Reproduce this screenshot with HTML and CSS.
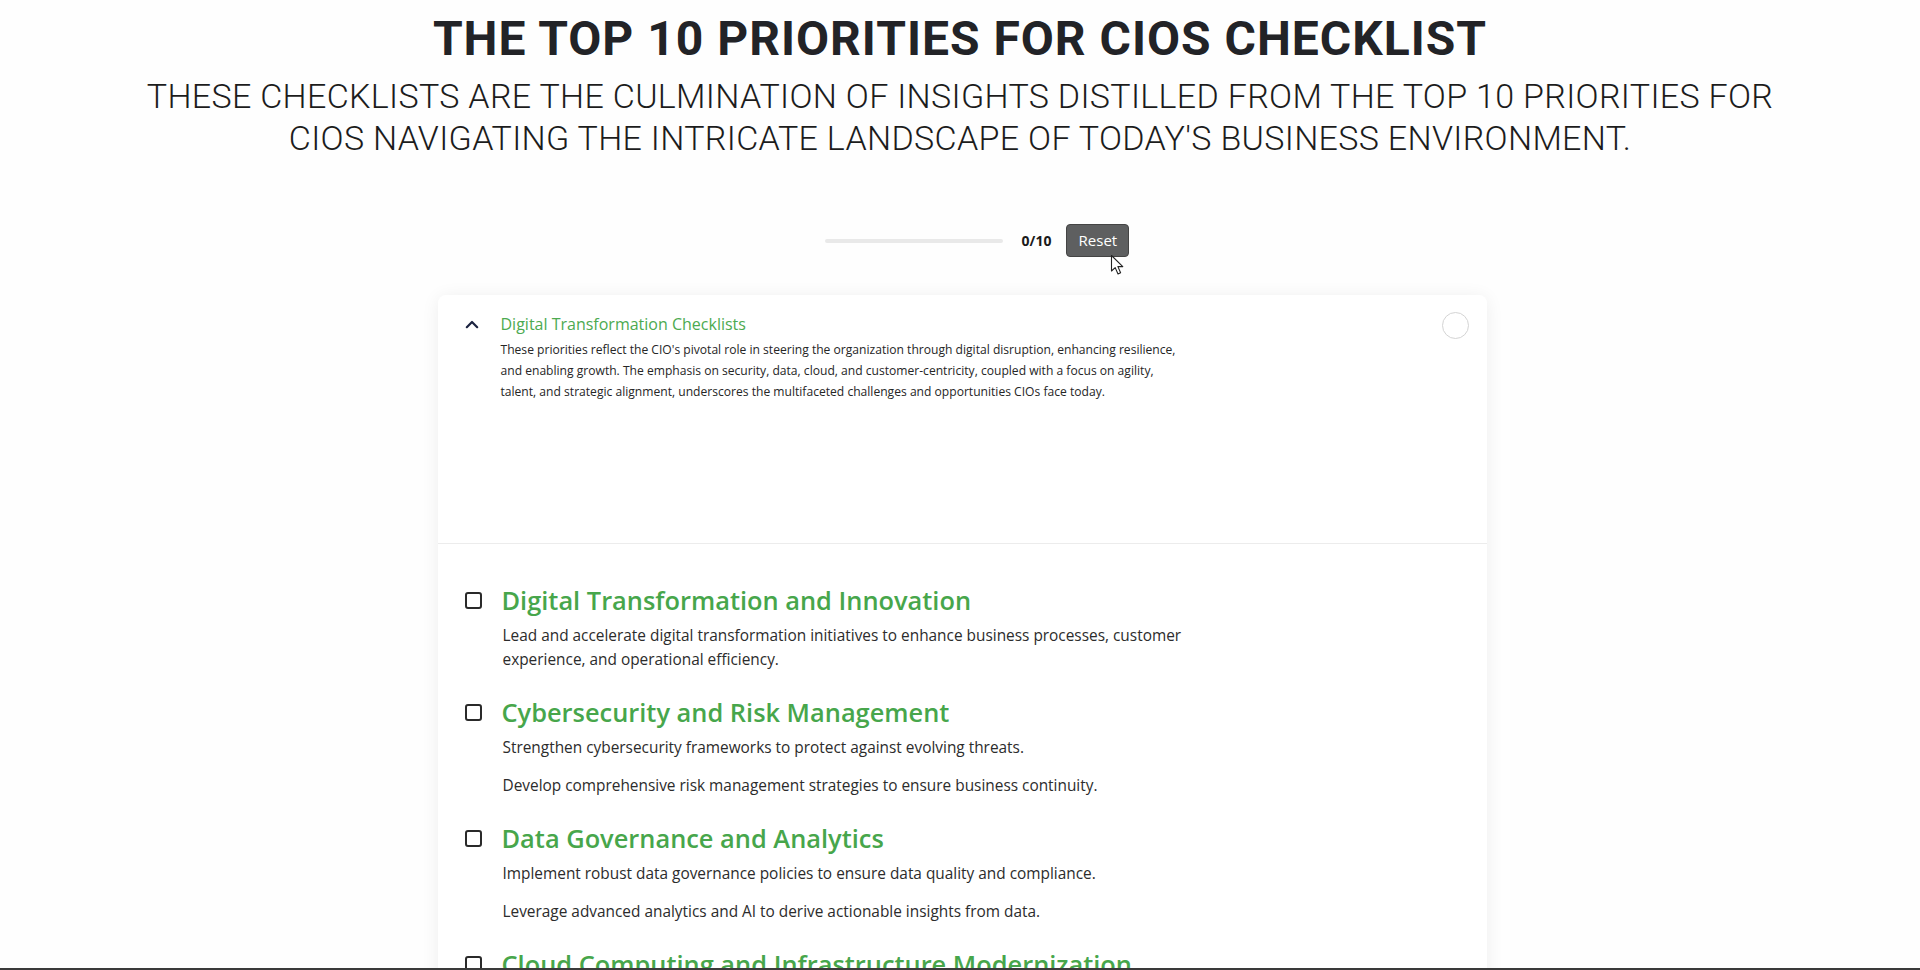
FILE: index.html
```html
<!DOCTYPE html>
<html lang="en">
<head>
<meta charset="utf-8">
<title>The Top 10 Priorities for CIOs Checklist</title>
<link rel="stylesheet" href="styles.css">
</head>
<body>
<div class="page">
  <header class="hero">
    <h1 class="hero-title">THE TOP 10 PRIORITIES FOR CIOS CHECKLIST</h1>
    <p class="hero-sub">THESE CHECKLISTS ARE THE CULMINATION OF INSIGHTS DISTILLED FROM THE TOP 10 PRIORITIES FOR<br>CIOS NAVIGATING THE INTRICATE LANDSCAPE OF TODAY'S BUSINESS ENVIRONMENT.</p>
  </header>

  <div class="progress-row">
    <div class="progress-track"><div class="progress-fill" style="width:0%"></div></div>
    <span class="progress-count">0/10</span>
    <div class="reset-wrap">
      <button class="reset-btn" type="button">Reset</button>
      <svg class="cursor" width="16" height="22" viewBox="0 0 16 22" aria-hidden="true">
        <path d="M1.5 1.5 L1.5 17 L5.2 13.6 L8 20 L10.6 18.8 L7.9 12.6 L12.8 12.6 Z" fill="#fff" stroke="#222" stroke-width="1.1" stroke-linejoin="round"/>
      </svg>
    </div>
  </div>

  <section class="card">
    <div class="card-head">
      <div class="head-row">
        <svg class="chevron" width="14" height="10" viewBox="0 0 14 10" aria-hidden="true">
          <path d="M1.8 8.2 L7 3 L12.2 8.2" fill="none" stroke="#1b2340" stroke-width="2.2" stroke-linecap="round" stroke-linejoin="round"/>
        </svg>
        <span class="head-title">Digital Transformation Checklists</span>
        <span class="head-circle"></span>
      </div>
      <p class="head-desc">These priorities reflect the CIO's pivotal role in steering the organization through digital disruption, enhancing resilience, and enabling growth. The emphasis on security, data, cloud, and customer-centricity, coupled with a focus on agility, talent, and strategic alignment, underscores the multifaceted challenges and opportunities CIOs face today.</p>
    </div>

    <div class="items">
      <div class="item">
        <div class="item-row"><span class="box"></span><h2 class="item-title">Digital Transformation and Innovation</h2></div>
        <p class="item-text">Lead and accelerate digital transformation initiatives to enhance business processes, customer experience, and operational efficiency.</p>
      </div>
      <div class="item">
        <div class="item-row"><span class="box"></span><h2 class="item-title">Cybersecurity and Risk Management</h2></div>
        <p class="item-text">Strengthen cybersecurity frameworks to protect against evolving threats.</p>
        <p class="item-text">Develop comprehensive risk management strategies to ensure business continuity.</p>
      </div>
      <div class="item">
        <div class="item-row"><span class="box"></span><h2 class="item-title">Data Governance and Analytics</h2></div>
        <p class="item-text">Implement robust data governance policies to ensure data quality and compliance.</p>
        <p class="item-text">Leverage advanced analytics and AI to derive actionable insights from data.</p>
      </div>
      <div class="item">
        <div class="item-row"><span class="box"></span><h2 class="item-title">Cloud Computing and Infrastructure Modernization</h2></div>
        <p class="item-text">Accelerate cloud adoption to improve scalability, agility, and cost efficiency.</p>
      </div>
    </div>
  </section>
</div>
<div class="frame-bottom"></div>
</body>
</html>
```

FILE: styles.css
```css
* { box-sizing: border-box; }

html, body {
  margin: 0;
  padding: 0;
  background: #fefefe;
  height: 100%;
  overflow: hidden;
}

body {
  font-family: "Open Sans", "Liberation Sans", sans-serif;
  color: #2a2a2a;
}

.page {
  display: flex;
  flex-direction: column;
  align-items: center;
}

.hero {
  display: flex;
  flex-direction: column;
  align-items: center;
  padding-top: 13px;
}

.hero-title {
  margin: 0;
  font-family: "Roboto", "Liberation Sans", sans-serif;
  font-weight: 700;
  font-size: 48px;
  line-height: 52px;
  color: #222327;
  letter-spacing: 1px;
}

.hero-sub {
  margin: 10px 0 0;
  font-family: "Roboto", "Liberation Sans", sans-serif;
  font-weight: 300;
  font-size: 34px;
  line-height: 42px;
  text-align: center;
  color: #1c1c1c;
  letter-spacing: 0.32px;
}

.progress-row {
  display: flex;
  align-items: center;
  margin-top: 65px;
  margin-left: 34px;
}

.progress-track {
  width: 178px;
  height: 4px;
  border-radius: 2px;
  background: #e9e9e9;
  overflow: hidden;
}

.progress-fill {
  height: 100%;
  background: #47a64b;
}

.progress-count {
  margin-left: 19px;
  font-size: 14px;
  font-weight: 700;
  color: #1a1a1a;
}

.reset-wrap {
  position: relative;
  margin-left: 15px;
}

.reset-btn {
  display: block;
  width: 63px;
  height: 33px;
  padding: 0;
  border: 1px solid #444;
  border-radius: 4px;
  background: #5e5f60;
  color: #fff;
  font-family: "Open Sans", "Liberation Sans", sans-serif;
  font-size: 15px;
  line-height: 31px;
}

.cursor {
  position: absolute;
  left: 44px;
  top: 30px;
}

.card {
  width: 1049px;
  margin-top: 38px;
  margin-left: 4px;
  background: #fff;
  border-radius: 8px;
  box-shadow: 0 2px 18px rgba(0, 0, 0, 0.07);
}

.card-head {
  height: 249px;
  padding: 17px 18px 0 27px;
  border-bottom: 1px solid #ececec;
}

.head-row {
  display: flex;
  align-items: center;
  height: 24px;
}

.chevron {
  flex: none;
  margin-right: 22px;
}

.head-title {
  flex: 1;
  font-size: 16px;
  color: #4caa50;
}

.head-circle {
  flex: none;
  width: 27px;
  height: 27px;
  border: 1.5px solid #d4d4d4;
  border-radius: 50%;
  margin-top: 3px;
}

.head-desc {
  margin: 3px 0 0 36px;
  max-width: 686px;
  font-size: 12.1px;
  line-height: 21px;
  color: #262626;
}

.items {
  padding: 38px 27px 0 27px;
}

.item {
  padding-bottom: 8.5px;
}

.item-row {
  display: flex;
  align-items: center;
  height: 36px;
  margin-bottom: 5.5px;
}

.box {
  flex: none;
  width: 17px;
  height: 17px;
  border: 2px solid #2a2a2a;
  border-radius: 3px;
  margin-right: 20px;
}

.item-title {
  margin: 0;
  font-size: 25.4px;
  font-weight: 600;
  line-height: 36px;
  color: #47a64b;
}

.item-text {
  margin: 0 0 14px 38px;
  max-width: 700px;
  font-size: 15.4px;
  line-height: 24px;
  color: #2c2c2c;
}

.frame-bottom {
  position: fixed;
  left: 0;
  right: 0;
  bottom: 0;
  height: 2px;
  background: #3a3a3a;
}
```
